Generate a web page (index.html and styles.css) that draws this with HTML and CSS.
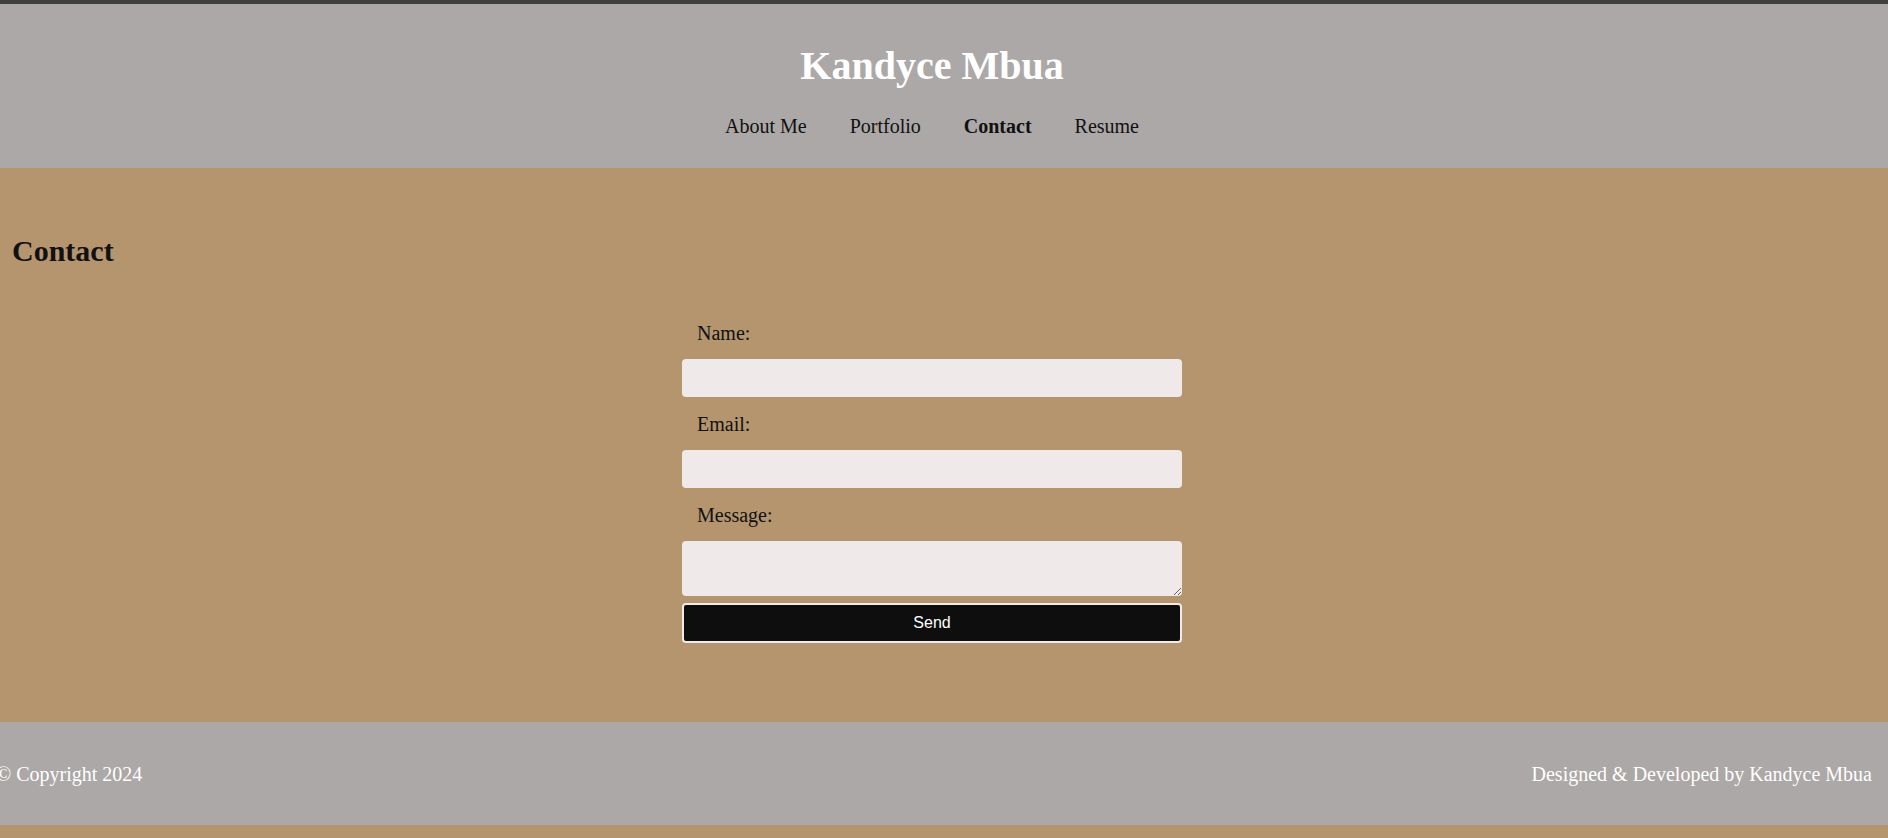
FILE: index.html
```html
<!DOCTYPE html>
<html lang="en">
<head>
<meta charset="utf-8">
<title>Contact - Kandyce Mbua</title>
<link rel="stylesheet" href="styles.css">
</head>
<body>
<header class="site-header">
  <h1 class="site-title">Kandyce Mbua</h1>
  <nav class="site-nav">
    <a href="#" class="nav-link">About Me</a>
    <a href="#" class="nav-link">Portfolio</a>
    <a href="#" class="nav-link active">Contact</a>
    <a href="#" class="nav-link">Resume</a>
  </nav>
</header>
<main class="content">
  <h2 class="page-title">Contact</h2>
  <form class="contact-form">
    <label class="field-label" for="name">Name:</label>
    <input class="field-input" type="text" id="name">
    <label class="field-label" for="email">Email:</label>
    <input class="field-input" type="email" id="email">
    <label class="field-label" for="message">Message:</label>
    <textarea class="field-textarea" id="message"></textarea>
    <button class="send-btn" type="button">Send</button>
  </form>
</main>
<footer class="site-footer">
  <p class="copy">© Copyright 2024</p>
  <p class="credit">Designed &amp; Developed by Kandyce Mbua</p>
</footer>
</body>
</html>
```
FILE: styles.css
```css
html, body {
  margin: 0;
  padding: 0;
}
body {
  background: #b5956e;
  font-family: "Liberation Serif", "Times New Roman", serif;
  font-size: 20px;
  line-height: 24px;
  color: #111;
  border-top: 4px solid #3f3f3f;
  overflow: hidden;
}
.site-header {
  background: #aca8a7;
  padding: 38px 24px 30px 0;
  display: flex;
  flex-direction: column;
  align-items: center;
}
.site-title {
  margin: 0;
  font-size: 40px;
  line-height: 48px;
  font-weight: bold;
  color: #fff;
}
.site-nav {
  margin-top: 24px;
  display: flex;
  gap: 43px;
}
.nav-link {
  color: #111;
  text-decoration: none;
  font-size: 20px;
  line-height: 24px;
}
.nav-link.active {
  font-weight: bold;
}
.content {
  padding: 65px 24px 79px 0;
}
.page-title {
  margin: 0;
  padding-left: 12px;
  font-size: 30px;
  line-height: 36px;
  font-weight: bold;
  color: #111;
}
.contact-form {
  width: 500px;
  margin: 37px auto 0;
  display: flex;
  flex-direction: column;
}
.field-label {
  padding: 15px 0 14px 15px;
  font-size: 20px;
  line-height: 24px;
  color: #111;
}
.field-input,
.field-textarea {
  box-sizing: border-box;
  width: 500px;
  border: none;
  border-radius: 4px;
  background: #efe9e9;
  margin: 0;
  font-family: "Liberation Serif", serif;
  font-size: 16px;
}
.field-input {
  height: 38px;
}
.field-textarea {
  height: 55px;
  display: block;
}
.send-btn {
  box-sizing: border-box;
  margin-top: 7px;
  height: 40px;
  width: 500px;
  background: #0e0e0e;
  color: #fff;
  border: 2px solid #f1ecea;
  border-radius: 4px;
  font-family: "Liberation Sans", Arial, sans-serif;
  font-size: 16px;
}
.site-footer {
  background: #aca8a7;
  margin-bottom: 14px;
  padding: 40px 16px 39px 0;
  display: flex;
  justify-content: space-between;
  color: #fff;
}
.site-footer p {
  margin: 0;
  font-size: 20px;
  line-height: 24px;
}
.copy {
  margin-left: -4px !important;
}
```
